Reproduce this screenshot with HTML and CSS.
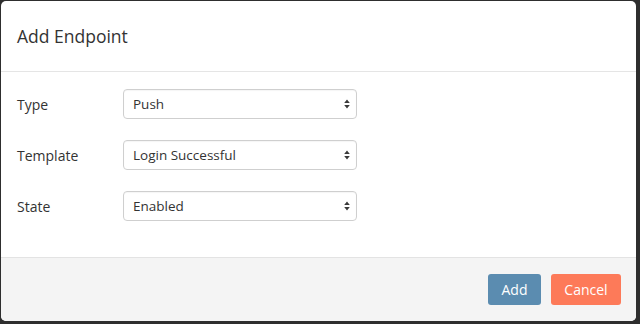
FILE: index.html
```html
<!DOCTYPE html>
<html lang="en">
<head>
    <meta charset="UTF-8">
    <meta name="viewport" content="width=device-width, initial-scale=1.0">
    <title>Add Endpoint</title>
    <link rel="stylesheet" href="styles.css">
</head>
<body>
    <div class="modal">
        <div class="modal-header">
            <h1>Add Endpoint</h1>
        </div>
        <div class="modal-body">
            <div class="row">
                <label for="type">Type</label>
                <div class="select-wrap">
                    <select id="type">
                        <option>Push</option>
                        <option>Email</option>
                        <option>SMS</option>
                    </select>
                    <svg class="caret" width="6" height="10" viewBox="0 0 6 10"><path d="M3 0.5 L5.8 4 L0.2 4 Z M3 9.5 L5.8 6 L0.2 6 Z" fill="#3a3a3a"/></svg>
                </div>
            </div>
            <div class="row">
                <label for="template">Template</label>
                <div class="select-wrap">
                    <select id="template">
                        <option>Login Successful</option>
                        <option>Login Failed</option>
                    </select>
                    <svg class="caret" width="6" height="10" viewBox="0 0 6 10"><path d="M3 0.5 L5.8 4 L0.2 4 Z M3 9.5 L5.8 6 L0.2 6 Z" fill="#3a3a3a"/></svg>
                </div>
            </div>
            <div class="row">
                <label for="state">State</label>
                <div class="select-wrap">
                    <select id="state">
                        <option>Enabled</option>
                        <option>Disabled</option>
                    </select>
                    <svg class="caret" width="6" height="10" viewBox="0 0 6 10"><path d="M3 0.5 L5.8 4 L0.2 4 Z M3 9.5 L5.8 6 L0.2 6 Z" fill="#3a3a3a"/></svg>
                </div>
            </div>
        </div>
        <div class="modal-footer">
            <button class="btn add">Add</button>
            <button class="btn cancel">Cancel</button>
        </div>
    </div>
    <div class="behind">Add Endpoint</div>
</body>
</html>
```

FILE: styles.css
```css
html, body {
    height: 324px;
    overflow: hidden;
}
body {
    font-family: 'Open Sans', Arial, sans-serif;
    background: #2e2e2e;
    margin: 0;
    padding: 1px 4px 0 1px;
    box-sizing: border-box;
    color: #333;
}
.modal {
    background: #fff;
    border-radius: 5px;
    overflow: hidden;
    width: 635px;
    height: 320px;
    display: flex;
    flex-direction: column;
}
.modal-header {
    height: 70px;
    border-bottom: 1px solid #e5e5e5;
    padding: 0 16px;
    display: flex;
    align-items: center;
}
.modal-header h1 {
    margin: 0;
    font-size: 17.5px;
    font-weight: 400;
    color: #333;
}
.modal-body {
    padding: 17px 16px 0;
    display: flex;
    flex-direction: column;
    gap: 21px;
    height: 185px;
    box-sizing: border-box;
    flex: none;
}
.row {
    display: flex;
    align-items: center;
    height: 30px;
}
.row label {
    width: 106px;
    font-size: 14px;
    font-weight: 500;
    color: #333;
}
.select-wrap {
    position: relative;
    width: 234px;
    height: 30px;
}
.select-wrap select {
    appearance: none;
    -webkit-appearance: none;
    width: 100%;
    height: 30px;
    box-sizing: border-box;
    border: 1px solid #cfcfcf;
    border-radius: 4px;
    background: #fff;
    padding: 0 24px 0 9px;
    font-family: 'Open Sans', Arial, sans-serif;
    font-size: 13.5px;
    color: #333;
    box-shadow: inset 0 1px 1px rgba(0,0,0,0.04);
}
.caret {
    position: absolute;
    right: 7px;
    top: 10px;
    pointer-events: none;
}
.modal-footer {
    flex: 1;
    background: #f4f4f4;
    border-top: 1px solid #e3e3e3;
    display: flex;
    justify-content: flex-end;
    align-items: flex-start;
    gap: 10px;
    padding: 16px 15px 0;
}
.btn {
    height: 31px;
    border: none;
    border-radius: 3px;
    color: #fff;
    font-family: 'Open Sans', Arial, sans-serif;
    font-size: 14px;
    font-weight: 500;
    padding: 0 12px;
    cursor: pointer;
}
.add {
    background: #5b8cb0;
    width: 53px;
}
.cancel {
    background: #fd7a59;
    width: 70px;
}
.behind {
    margin: 1px 0 0 55px;
    font-size: 18px;
    font-weight: 700;
    color: #1d2d4a;
    line-height: 18px;
}
```
